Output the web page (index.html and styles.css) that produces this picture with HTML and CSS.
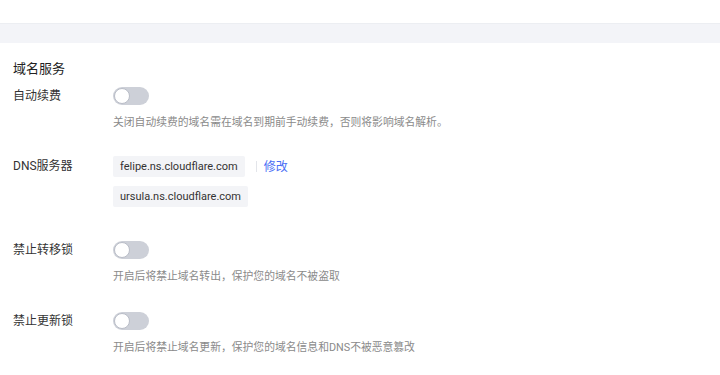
FILE: index.html
```html
<!DOCTYPE html>
<html lang="zh-CN">
<head>
<meta charset="utf-8">
<link rel="stylesheet" href="styles.css">
</head>
<body>
<div class="top"></div>
<div class="band"></div>
<section class="panel">
  <h2 class="title">域名服务</h2>
  <div class="row row-renew">
    <div class="label">自动续费</div>
    <div class="value">
      <span class="switch"><span class="knob"></span></span>
      <p class="desc">关闭自动续费的域名需在域名到期前手动续费，否则将影响域名解析。</p>
    </div>
  </div>
  <div class="row row-dns">
    <div class="label">DNS服务器</div>
    <div class="value">
      <div class="dns-line">
        <span class="tag">felipe.ns.cloudflare.com</span>
        <span class="sep"></span>
        <a class="link">修改</a>
      </div>
      <div class="dns-line">
        <span class="tag">ursula.ns.cloudflare.com</span>
      </div>
    </div>
  </div>
  <div class="row row-transfer">
    <div class="label">禁止转移锁</div>
    <div class="value">
      <span class="switch"><span class="knob"></span></span>
      <p class="desc">开启后将禁止域名转出，保护您的域名不被盗取</p>
    </div>
  </div>
  <div class="row row-update">
    <div class="label">禁止更新锁</div>
    <div class="value">
      <span class="switch"><span class="knob"></span></span>
      <p class="desc">开启后将禁止域名更新，保护您的域名信息和DNS不被恶意篡改</p>
    </div>
  </div>
</section>
</body>
</html>
```
FILE: styles.css
```css
* { box-sizing: border-box; }
html, body { margin: 0; padding: 0; background: #fff; }
body {
  font-family: Roboto, "Noto Sans CJK SC", sans-serif;
  color: #333;
  width: 720px;
  height: 375px;
  overflow: hidden;
}
.top { height: 23px; background: #fff; }
.band {
  height: 20px;
  background: #f3f4f8;
  border-top: 1px solid #eceef2;
}
.panel { padding: 16px 0 0 13px; }
.title {
  margin: 0;
  font-size: 13px;
  font-weight: 400;
  line-height: 20px;
  color: #222;
}
.row { display: flex; }
.label {
  width: 100px;
  flex: none;
  font-size: 12px;
  line-height: 18px;
  color: #333;
}
.value { display: flex; flex-direction: column; align-items: flex-start; }
.switch {
  position: relative;
  display: block;
  width: 36px;
  height: 18px;
  border-radius: 9px;
  background: #cdd0d8;
}
.knob {
  position: absolute;
  left: 1px;
  top: 1px;
  width: 16px;
  height: 16px;
  border-radius: 50%;
  background: #fff;
  border: 1px solid #b9bdc7;
}
.desc {
  margin: 9px 0 0;
  font-size: 10.8px;
  line-height: 18px;
  color: #8a8a8a;
}
.row-renew { margin-top: 8px; }
.row-dns { margin-top: 24px; }
.row-dns .label { line-height: 21px; }
.row-transfer { margin-top: 34px; }
.row-update { margin-top: 26px; }
.dns-line { display: flex; align-items: center; }
.dns-line + .dns-line { margin-top: 9px; }
.tag {
  display: inline-block;
  height: 21px;
  line-height: 21px;
  padding: 0 7px;
  background: #f3f4f7;
  border-radius: 2px;
  font-size: 11px;
  color: #333;
}
.sep {
  width: 1px;
  height: 11px;
  background: #e3e5ea;
  margin: 0 7px 0 11px;
}
.link {
  font-size: 12px;
  color: #4a6ef5;
  cursor: pointer;
  line-height: 18px;
}
```
